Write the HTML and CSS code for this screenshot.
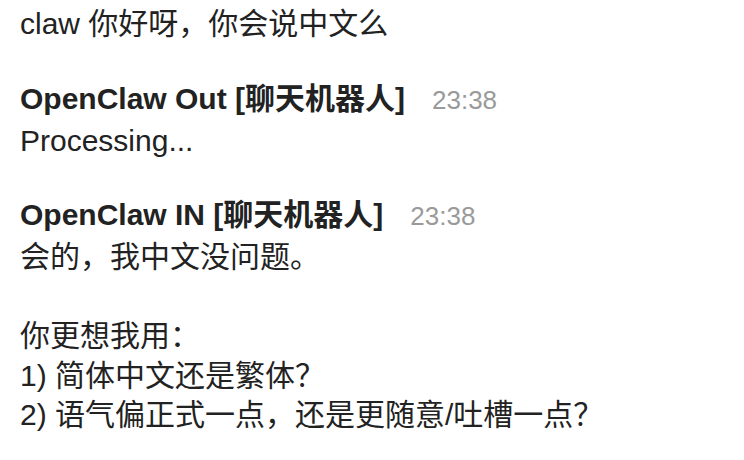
FILE: index.html
```html
<!DOCTYPE html>
<html lang="zh-CN">
<head>
    <meta charset="UTF-8">
    <meta name="viewport" content="width=device-width, initial-scale=1.0">
    <title>OpenClaw</title>
    <link rel="stylesheet" href="styles.css">
</head>
<body>
    <div class="chat">
        <div class="message first">
            <div class="text">claw 你好呀，你会说中文么</div>
        </div>
        <div class="message">
            <div class="meta">
                <span class="author">OpenClaw Out [聊天机器人]</span>
                <span class="time">23:38</span>
            </div>
            <div class="text">Processing...</div>
        </div>
        <div class="message">
            <div class="meta">
                <span class="author">OpenClaw IN [聊天机器人]</span>
                <span class="time">23:38</span>
            </div>
            <div class="text">会的，我中文没问题。

你更想我用：
1) 简体中文还是繁体？
2) 语气偏正式一点，还是更随意/吐槽一点？</div>
        </div>
    </div>
</body>
</html>
```

FILE: styles.css
```css
body {
    margin: 0;
    background-color: #ffffff;
    color: #222222;
    font-family: "Liberation Sans", "Noto Sans CJK SC", sans-serif;
    font-size: 30px;
}

.chat {
    padding: 4px 20px;
}

.message {
    margin-top: 35px;
}

.message.first {
    margin-top: 0;
}

.meta {
    display: flex;
    align-items: baseline;
    gap: 27px;
    line-height: 40px;
}

.author {
    font-weight: bold;
}

.time {
    color: #9a9a9a;
    font-size: 26px;
}

.text {
    margin-top: 1px;
    line-height: 39.5px;
    white-space: pre-line;
}

.message.first .text {
    margin-top: 0;
}
```
